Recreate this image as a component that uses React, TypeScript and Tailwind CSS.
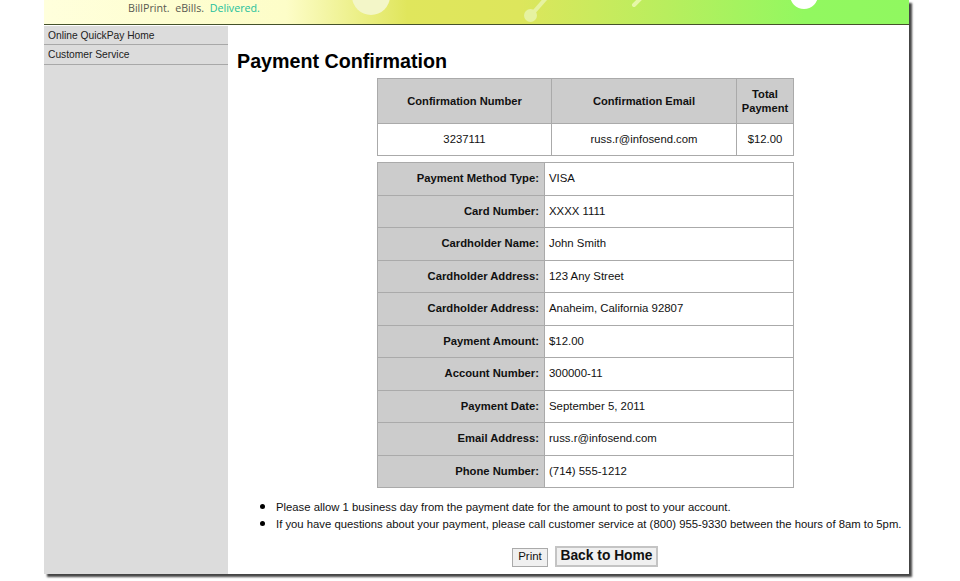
const details = [
  ['Payment Method Type:', 'VISA'],
  ['Card Number:', 'XXXX 1111'],
  ['Cardholder Name:', 'John Smith'],
  ['Cardholder Address:', '123 Any Street'],
  ['Cardholder Address:', 'Anaheim, California 92807'],
  ['Payment Amount:', '$12.00'],
  ['Account Number:', '300000-11'],
  ['Payment Date:', 'September 5, 2011'],
  ['Email Address:', 'russ.r@infosend.com'],
  ['Phone Number:', '(714) 555-1212'],
]

function Banner() {
  return (
    <div className="relative h-[25px] overflow-hidden border-b border-[#45522a] bg-[linear-gradient(90deg,#ffffdc_0%,#fdfdc8_28%,#e0e65c_42%,#dde65c_55%,#b8ee5e_72%,#92f860_88%,#90f860_100%)]">
      {/* bubbles and sticks from the header artwork */}
      <svg className="absolute inset-0" width="865" height="25" viewBox="0 0 865 25">
        <circle cx="327" cy="-4" r="19" fill="#f3f6c8" />
        <path d="M489 13 L503 -3" stroke="#e6f2a0" strokeWidth="4" />
        <circle cx="486.5" cy="15.5" r="6.5" fill="#e6f2a0" />
        <path d="M590 5 L597 -2" stroke="#e6f7a8" strokeWidth="4" strokeLinecap="round" />
        <circle cx="760" cy="-5" r="14" fill="#ffffff" />
      </svg>
      <div className="relative pl-[84px] pt-[1px] font-['Open_Sans',sans-serif] text-[10.7px] leading-[14px] text-[#5a5a50]">
        BillPrint.&nbsp; eBills.&nbsp; <span className="text-[#1cc09c]">Delivered.</span>
      </div>
    </div>
  )
}

function Sidebar() {
  return (
    <div className="mt-[1px] w-[184px] shrink-0 bg-[#dcdcdc] text-[10.25px] text-[#222]">
      <div className="h-[19px] border-b border-[#a8a8a8] pl-1 leading-[19px]">Online QuickPay Home</div>
      <div className="h-[20px] border-b border-[#a8a8a8] pl-1 leading-[20px]">Customer Service</div>
    </div>
  )
}

export default function App() {
  return (
    <div className="h-[581px] overflow-hidden bg-white pl-[44px] font-['Liberation_Sans',Arial,sans-serif] text-black">
      <div className="flex h-[574px] w-[865px] flex-col bg-white shadow-[3px_3px_2px_#444]">
        <Banner />
        <div className="flex flex-1">
          <Sidebar />
          <main className="flex-1 pl-[9px]">
            <h1 className="mt-[23px] text-[19.7px] font-bold leading-[26px]">Payment Confirmation</h1>

            <table className="ml-[140px] mt-[4px] w-[416px] table-fixed border-collapse text-[11.3px] text-[#111]">
              <colgroup>
                <col className="w-[174px]" />
                <col className="w-[185px]" />
                <col className="w-[57px]" />
              </colgroup>
              <thead>
                <tr className="h-[45px] bg-[#cccccc] text-[11.15px] leading-[14px]">
                  <th className="border border-[#aaaaaa]">Confirmation Number</th>
                  <th className="border border-[#aaaaaa]">Confirmation Email</th>
                  <th className="border border-[#aaaaaa]">Total Payment</th>
                </tr>
              </thead>
              <tbody>
                <tr className="h-[32px] text-center">
                  <td className="border border-[#aaaaaa]">3237111</td>
                  <td className="border border-[#aaaaaa]">russ.r@infosend.com</td>
                  <td className="border border-[#aaaaaa]">$12.00</td>
                </tr>
              </tbody>
            </table>

            <table className="ml-[140px] mt-[6px] w-[416px] table-fixed border-collapse text-[11.4px] text-[#111]">
              <colgroup>
                <col className="w-[167px]" />
                <col className="w-[249px]" />
              </colgroup>
              <tbody>
                {details.map(([label, value], i) => (
                  <tr key={i} className="h-[32.5px]">
                    <th className="border border-[#aaaaaa] bg-[#cccccc] pr-[5px] text-right text-[11.25px] font-bold">{label}</th>
                    <td className="border border-[#aaaaaa] pl-[4px]">{value}</td>
                  </tr>
                ))}
              </tbody>
            </table>

            <ul className="ml-[30px] mt-[9px] list-disc whitespace-nowrap pl-[9px] text-[11.3px] leading-[17px] text-[#111] marker:text-[16px] marker:text-black">
              <li className="h-[17px]">Please allow 1 business day from the payment date for the amount to post to your account.</li>
              <li className="h-[17px]">If you have questions about your payment, please call customer service at (800) 955-9330 between the hours of 8am to 5pm.</li>
            </ul>

            <div className="ml-[275px] mt-[15px] flex items-end gap-[7px]">
              <button className="h-[19px] w-[36px] border border-[#aaaaaa] bg-[#f0f0f0] pb-[2px] text-[11.5px] leading-[15px] text-[#111]">Print</button>
              <button className="h-[21px] w-[103px] border-2 border-[#c4c4c4] bg-[#f0f0f0] pb-[2px] text-[13.8px] font-bold leading-[15px] text-[#111]">Back to Home</button>
            </div>
          </main>
        </div>
      </div>
    </div>
  )
}
